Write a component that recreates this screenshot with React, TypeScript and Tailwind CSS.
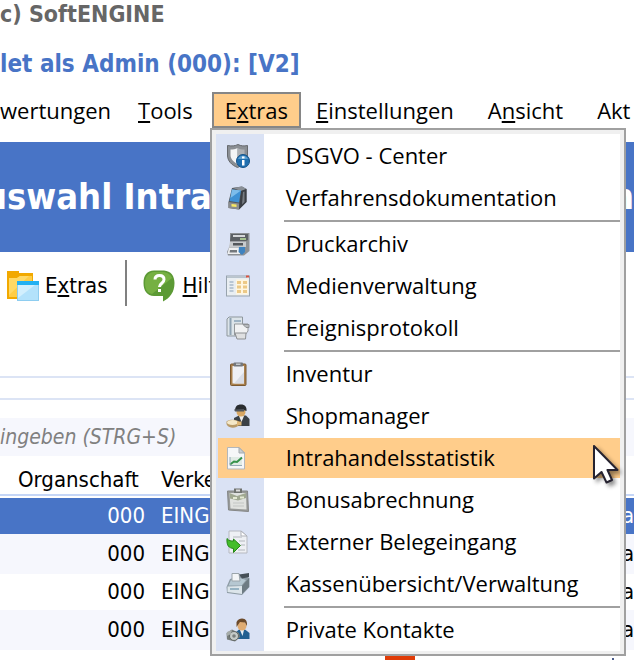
import { ReactNode } from "react";

function ShieldIcon() {
  return (
    <svg viewBox="0 0 24 24" className="h-6 w-6 shrink-0" aria-hidden="true">
      <path
        d="M12 0.500C9 2 6 2.300 1.500 1.500V11c0 6 4 10 10 12.500 6-2.500 10-6.500 10-12.500V1.500C18 2.300 15 2 12 0.500z"
        fill="#8b8f94"
        stroke="#66696d"
      />
      <path d="M11.500 4c-2 1-4.500 1.500-7 1.500V11c0 4 3 7 7 9z" fill="#f4f5f6" />
      <path d="M11.500 4c2 1 4.500 1.500 7 1.500V11c0 4-3 7-7 9z" fill="#aeb1b5" />
      <circle cx="17" cy="17" r="6.500" fill="#1f6fb0" stroke="#155389" />
      <path d="M12 15a5.500 5.500 0 0 1 10 0z" fill="#5c9fd0" />
      <rect x="16" y="16" width="2.500" height="5.500" fill="#fff" />
      <rect x="16" y="12.500" width="2.500" height="2" fill="#fff" />
    </svg>
  );
}

function BookIcon() {
  return (
    <svg viewBox="0 0 24 24" className="h-6 w-6 shrink-0" aria-hidden="true">
      <path d="M2.500 16 6 2 16 0.500 20.500 3V16L13 23.500 2.500 22z" fill="#54585d" />
      <path d="M7 2 16 0.500 20.500 3 15 5z" fill="#8a9097" />
      <path d="M15 5 20.500 3V16L13 23.500z" fill="#3b3f44" />
      <path d="M17 6 18.500 5.500V16L16 18.500z" fill="#777c82" />
      <path d="M6 3.500 15 4.500 13 16.500 3.500 15z" fill="#3f91d4" />
      <path d="M6 3.500 15 4.500 4.500 12z" fill="#7dbcea" />
      <path d="M2.500 16 13 17.500V23.500L2.500 22z" fill="#8b8d8e" />
      <path d="M5.500 18 10.500 18.500V21L5.500 20.500z" fill="#f7e963" />
    </svg>
  );
}

function PrinterIcon() {
  return (
    <svg viewBox="0 0 24 24" className="h-6 w-6 shrink-0" aria-hidden="true">
      <path d="M4 1H23.500V19L18 23.500H2L1 20 4 13z" fill="#8d9195" />
      <path d="M5 2H22V8L19 9.500H4z" fill="#5c6064" />
      <path d="M7 3H19V5H7z" fill="#d5d7d9" />
      <path d="M14 6H20V8H14z" fill="#a4c08f" />
      <path d="M4 9.500H20V15H3z" fill="#c7cacd" />
      <rect x="7" y="11" width="10" height="2.500" fill="#53575b" />
      <path d="M3 15.500H14V22H1.500z" fill="#eeeff0" />
      <path d="M4 18H11V20.500H3.500z" fill="#74797d" />
      <path d="M13 15H19V20L16 23 12.500 20z" fill="#3f83c0" />
    </svg>
  );
}

function MediaIcon() {
  return (
    <svg viewBox="0 0 24 24" className="h-6 w-6 shrink-0" aria-hidden="true">
      <rect x="0.500" y="2" width="23" height="20" fill="#e9eef2" stroke="#98a3ad" />
      <rect x="1" y="2.500" width="20" height="1.500" fill="#b8c4cd" />
      <rect x="20" y="1.500" width="3" height="2" fill="#d95341" />
      <path
        d="M3.500 8h4M3.500 11h4M3.500 14h4M3.500 17h4"
        stroke="#a9bacb"
        strokeWidth="1.500"
      />
      <rect x="10" y="5.500" width="12" height="15" fill="#fff6e0" />
      <path
        d="M11 7h4v3h-4zM17 7h4v3h-4zM11 11.500h4v3h-4zM17 11.500h4v3h-4zM11 16h4v3h-4zM17 16h4v3h-4z"
        fill="#ecc987"
      />
    </svg>
  );
}

function LogIcon() {
  return (
    <svg viewBox="0 0 24 24" className="h-6 w-6 shrink-0" aria-hidden="true">
      <path d="M3 1H16.500V20H1V3z" fill="#dce4e9" stroke="#8e979d" />
      <path d="M4.500 2V19" stroke="#8fa3b3" strokeWidth="2" />
      <path d="M8 5h7" stroke="#9eb3c4" strokeWidth="2" />
      <path d="M8.500 8H22V15L19 19H8.500z" fill="#f1f2f3" stroke="#94989b" />
      <path d="M9 17H20L19.500 23H11z" fill="#dfe0e1" stroke="#8d9093" />
      <path d="M17 8.500h6v3h-3z" fill="#b8bcbf" stroke="#8d9093" />
    </svg>
  );
}

function ClipboardIcon() {
  return (
    <svg viewBox="0 0 24 24" className="h-6 w-6 shrink-0" aria-hidden="true">
      <rect x="4.500" y="2" width="15.500" height="21.500" rx="1" fill="#a9804d" stroke="#7b5a32" />
      <path d="M6.500 4H18V21.500H6.500z" fill="#eef0f5" />
      <path d="M18 10V21.500H8z" fill="#d9dde6" />
      <rect x="7.500" y="0.500" width="9.500" height="4" rx="1" fill="#73777c" />
      <rect x="10" y="1.500" width="4.500" height="1.500" fill="#c4c8cc" />
    </svg>
  );
}

function ShopIcon() {
  return (
    <svg viewBox="0 0 24 24" className="h-6 w-6 shrink-0" aria-hidden="true">
      <path d="M8 14 13 11.500H20L23.500 15V22H8z" fill="#3b4147" />
      <path d="M13 12H18L15.500 18z" fill="#eeeeee" />
      <circle cx="15" cy="8" r="4.500" fill="#d8a763" />
      <path d="M9 7C9 2.500 11 0.500 15 0.500s6 2.500 5.500 6.500l-3-1z" fill="#292c2f" />
      <path d="M8 5.500 18 5V7.500H9z" fill="#51565b" />
      <path d="M0.500 17.500C3 15 10 15 13 17.500V20C12 25 2 25 0.500 20z" fill="#b89a68" />
      <ellipse cx="6.500" cy="18.500" rx="5.500" ry="2.500" fill="#f4e8c8" />
      <path d="M11 17.500H15.500V21.500H11z" fill="#dfb675" />
    </svg>
  );
}

function ChartIcon() {
  return (
    <svg viewBox="0 0 24 24" className="h-6 w-6 shrink-0" aria-hidden="true">
      <path d="M1.500 1.500H13L18.500 7V23H1.500z" fill="#f6f7f8" stroke="#b3b7bb" />
      <path d="M13 1.500V7H18.500z" fill="#c9ced2" stroke="#a4a9ad" />
      <rect x="4" y="11" width="12" height="8.500" fill="#e1ebe5" />
      <path d="M4 18.500 8 15.500 11 16 16 11.500" fill="none" stroke="#35924a" strokeWidth="2" />
      <path d="M4 11V19.500H16" fill="none" stroke="#96abb8" />
    </svg>
  );
}

function BonusIcon() {
  return (
    <svg viewBox="0 0 24 24" className="h-6 w-6 shrink-0" aria-hidden="true">
      <path d="M1.500 3H21.500L22.500 23.500 2.500 22z" fill="#989a99" stroke="#858786" />
      <path d="M3.500 5H20L20.500 21.500 4.500 20.500z" fill="#e0e2df" />
      <path d="M3.500 5 11 8 20 5V10L12 12.500 4 10.500z" fill="#a0a890" />
      <path d="M8 0.500H16V5H8z" fill="#70736f" />
      <rect x="10" y="1.500" width="4" height="2" fill="#dbdcdb" />
      <path d="M7 9h4v2H7zM14 8.500h4v2h-4z" fill="#e4ead3" />
      <path d="M7 15h11M7 18h11" stroke="#c3c6c4" />
    </svg>
  );
}

function ImportIcon() {
  return (
    <svg viewBox="0 0 24 24" className="h-6 w-6 shrink-0" aria-hidden="true">
      <path d="M3 1H15L21 6V23H3z" fill="#eef0f4" stroke="#b6b9c0" />
      <path d="M15 1V6H21z" fill="#fff" stroke="#aeb1b8" />
      <path d="M7 7h9M13 11h6M15 15h4M12 20h7" stroke="#c6c9ce" strokeWidth="1.500" />
      <path
        d="M1 8.500C3 11 5 11 7.500 11V9L14.500 15.500 7.500 22.500V18.500C3 18 0.500 16 1 8.500z"
        fill="#43bd29"
        stroke="#268519"
      />
    </svg>
  );
}

function CashIcon() {
  return (
    <svg viewBox="0 0 24 24" className="h-6 w-6 shrink-0" aria-hidden="true">
      <path d="M0.500 15 4 7 17 3 23.500 6V15L16 23 1 21z" fill="#8d9ba4" />
      <path d="M1.500 14.500 16 14V22L1.500 20z" fill="#dce5ea" />
      <path d="M16 14 23 6V15L16 22z" fill="#6e7b83" />
      <path d="M5 8 14 6 20 8 15.500 13.500 2.500 13.500z" fill="#b6c7d1" />
      <path d="M6 1.500H13L14 9H6z" fill="#f3f5f7" stroke="#9ba5ab" />
      <path d="M13 2.500 23 1V5L16 6.500z" fill="#465057" />
      <path d="M4 17h9" stroke="#7fa0b5" strokeWidth="1.500" />
    </svg>
  );
}

function ContactIcon() {
  return (
    <svg viewBox="0 0 24 24" className="h-6 w-6 shrink-0" aria-hidden="true">
      <path d="M9 15 13 11.500H19L23.500 15V21H9z" fill="#205f91" />
      <path d="M14 12H18L16.500 18z" fill="#e6eef4" />
      <circle cx="16" cy="8" r="4.500" fill="#e0ac72" />
      <path d="M10.500 9V4C12 1 14 0.500 16 0.500c4 0 5.500 3 5 7.500L19 4.500 14 4z" fill="#6c4a2a" />
      <path d="M0.500 15 6 11.500 13 15 14 19 9 23.500 1 21.500z" fill="#777d7b" />
      <circle cx="8" cy="18" r="4.500" fill="#c5cbc8" stroke="#626866" />
      <circle cx="8" cy="18" r="1.800" fill="#797f7d" />
      <path d="M1 14 6 12 5 16 1 18z" fill="#a5aba8" />
    </svg>
  );
}

function FolderIcon() {
  return (
    <svg viewBox="0 0 32 32" className="h-8 w-8 shrink-0" aria-hidden="true">
      <path d="M0 1H12V3H26V29H0z" fill="#f2a900" />
      <path d="M2 8 10 8 13 6H25V27H2z" fill="#ffcd45" />
      <path d="M2 8 10 8 13 6H22L2 25z" fill="#ffd966" />
      <rect x="10" y="11" width="22" height="20" fill="#8ecdf0" />
      <rect x="11" y="15" width="20" height="15" fill="#b3e2fb" />
      <path d="M11 15H28L11 28z" fill="#d2effd" />
      <rect x="10" y="11" width="22" height="4" fill="#23b1f2" />
    </svg>
  );
}

function HelpIcon() {
  return (
    <svg viewBox="0 0 32 32" className="h-8 w-8 shrink-0" aria-hidden="true">
      <path
        d="M11 0.500H21C28 1 31.500 6 31.500 13 31.500 22 27 28 20 31.500V26H11C4 25.500 0.500 21 0.500 13S4 1 11 0.500z"
        fill="#5c9a35"
      />
      <path d="M11 2H20C25 2.500 28 5 29 8L9 24C4 23 2 19 2 13S5 2.500 11 2z" fill="#76b043" />
      <path
        d="M12 9.500C12 6 14 5.500 16.500 5.500c3 0 4.500 1.500 4.500 4 0 4-4.500 3.500-4.500 7.500"
        fill="none"
        stroke="#fff"
        strokeWidth="3"
      />
      <rect x="15" y="19" width="3" height="3" fill="#fff" />
    </svg>
  );
}

function CursorIcon() {
  return (
    <svg
      viewBox="0 0 32 42"
      className="pointer-events-none absolute right-[-4px] top-1.5 z-10 h-[42px] w-8 drop-shadow-[3px_3px_2px_rgba(0,0,0,0.45)]"
      aria-hidden="true"
    >
      <path
        d="M2 2V34.500L9.500 28 14.500 38.500 20 36 15.500 26H25.500z"
        fill="#fff"
        stroke="#262330"
        strokeWidth="2"
        strokeLinejoin="round"
      />
    </svg>
  );
}

type MenuEntry = { label: string; icon: ReactNode; active?: boolean };

const menuGroups: MenuEntry[][] = [
  [
    { label: "DSGVO - Center", icon: <ShieldIcon /> },
    { label: "Verfahrensdokumentation", icon: <BookIcon /> },
  ],
  [
    { label: "Druckarchiv", icon: <PrinterIcon /> },
    { label: "Medienverwaltung", icon: <MediaIcon /> },
    { label: "Ereignisprotokoll", icon: <LogIcon /> },
  ],
  [
    { label: "Inventur", icon: <ClipboardIcon /> },
    { label: "Shopmanager", icon: <ShopIcon /> },
    { label: "Intrahandelsstatistik", icon: <ChartIcon />, active: true },
    { label: "Bonusabrechnung", icon: <BonusIcon /> },
    { label: "Externer Belegeingang", icon: <ImportIcon /> },
    { label: "Kassenübersicht/Verwaltung", icon: <CashIcon /> },
  ],
  [{ label: "Private Kontakte", icon: <ContactIcon /> }],
];

function Key({ children }: { children: ReactNode }) {
  return (
    <span className="underline decoration-2 underline-offset-2 [text-decoration-skip-ink:none]">
      {children}
    </span>
  );
}

function ExtrasMenu() {
  return (
    <div
      role="menu"
      aria-label="Extras"
      className="absolute -left-0.5 top-full z-20 w-[416px] border-2 border-[#a0a0a0] bg-[#f0f0f0] px-1 pt-1 pb-[3px]"
    >
      <div className="bg-[linear-gradient(to_right,#dae2f4_48px,#ffffff_48px)] pt-px">
        {menuGroups.map((group, i) => (
          <div key={i} role="group">
            {i > 0 && (
              <div role="separator" className="ml-[68px] h-1 pt-px">
                <div className="h-0.5 bg-[#a0a0a0]"></div>
              </div>
            )}
            {group.map((entry) => (
              <div key={entry.label} className="py-px pl-0.5">
                <button
                  role="menuitem"
                  className={`relative flex h-10 w-full items-center gap-9 pl-2 text-left hover:bg-[#ffcd8b] ${
                    entry.active ? "bg-[#ffcd8b]" : ""
                  }`}
                >
                  {entry.icon}
                  <span className="whitespace-nowrap pb-0.5">
                    {entry.label}
                  </span>
                  {entry.active && <CursorIcon />}
                </button>
              </div>
            ))}
          </div>
        ))}
      </div>
    </div>
  );
}

function MenuBar() {
  const item = "h-9 shrink-0 border-2 border-transparent pr-[17px] pl-[13px]";
  return (
    <nav className="flex whitespace-nowrap font-['Open_Sans',sans-serif] text-[22px] leading-8 text-black">
      <button className="h-9 shrink-0 border-y-2 border-transparent pr-3">
        wertungen
      </button>
      <button className={item}>
        <Key>T</Key>ools
      </button>
      <div className="relative">
        <button
          aria-haspopup="menu"
          aria-expanded="true"
          className="h-9 border-2 border-[#868686] bg-[#ffcd8b] px-[11px]"
        >
          E<Key>x</Key>tras
        </button>
        <ExtrasMenu />
      </div>
      <button className={item}>
        <Key>E</Key>instellungen
      </button>
      <button className={item}>
        A<Key>n</Key>sicht
      </button>
      <button className="h-9 shrink-0 border-y-2 border-transparent pl-[15px]">
        Akt
      </button>
    </nav>
  );
}

const rows = [
  "h-9 bg-[#4874c6] text-white",
  "h-10 bg-[#f6f7fd]",
  "h-9 bg-white",
  "h-10 bg-[#f6f7fd]",
];

export default function App() {
  return (
    <div className="min-h-screen overflow-hidden bg-white font-['DejaVu_Sans_Condensed','DejaVu_Sans',sans-serif] text-[22px] leading-7 text-black">
      <header className="flex h-[92px] flex-col whitespace-nowrap font-bold">
        <div className="h-[50px] text-[23px] text-[#666666]">c) SoftENGINE</div>
        <div className="text-2xl leading-7 text-[#4874c6]">
          let als Admin (000): [V2]
        </div>
      </header>

      <MenuBar />

      <div className="mt-3.5 flex h-[110px] items-center justify-between overflow-hidden whitespace-nowrap bg-[#4874c6] text-4xl font-bold text-white">
        <h1 className="-ml-4">uswahl Intra</h1>
        <span>n</span>
      </div>

      <div className="flex h-[126px] items-start border-b-2 border-[#dce4f5] pt-2">
        <button className="flex h-[46px] items-center gap-1.5 border-r-2 border-[#808080] pt-1.5 pr-[17px] pl-[7px]">
          <FolderIcon />
          <span>
            E<Key>x</Key>tras
          </span>
        </button>
        <button className="flex h-[46px] items-center gap-2 pt-1.5 pl-4">
          <HelpIcon />
          <span>
            <Key>H</Key>ilf
          </span>
        </button>
      </div>
      <div className="h-[22px] border-b-2 border-[#dce4f5]"></div>

      <input
        type="text"
        aria-label="Suche"
        placeholder="ingeben (STRG+S)"
        className="mt-[18px] block h-[38px] w-full bg-[#f6f7fd] text-[21px] italic outline-none placeholder:text-[#808080]"
      />

      <table className="w-full table-fixed border-separate border-spacing-0">
        <colgroup>
          <col className="w-[161px]" />
          <col />
          <col className="w-3" />
        </colgroup>
        <thead>
          <tr className="h-10 text-left align-bottom">
            <th className="border-b-2 border-[#c5d6f7] pl-[18px] font-normal">
              Organschaft
            </th>
            <th className="border-b-2 border-[#c5d6f7] font-normal">Verke</th>
            <th className="border-b-2 border-[#c5d6f7]"></th>
          </tr>
          <tr className="h-0.5">
            <td colSpan={3}></td>
          </tr>
        </thead>
        <tbody>
          {rows.map((row, i) => (
            <tr key={i} className={row}>
              <td className="pr-4 text-right">000</td>
              <td>EING</td>
              <td className="text-right">a</td>
            </tr>
          ))}
        </tbody>
      </table>

      <footer className="mt-1.5 flex h-1 justify-between pr-5 pl-[385px]">
        <div className="w-[30px] bg-[#e03c08]"></div>
        <div className="mt-0.5 w-0.5 bg-[#4a5a8a]"></div>
      </footer>
    </div>
  );
}
